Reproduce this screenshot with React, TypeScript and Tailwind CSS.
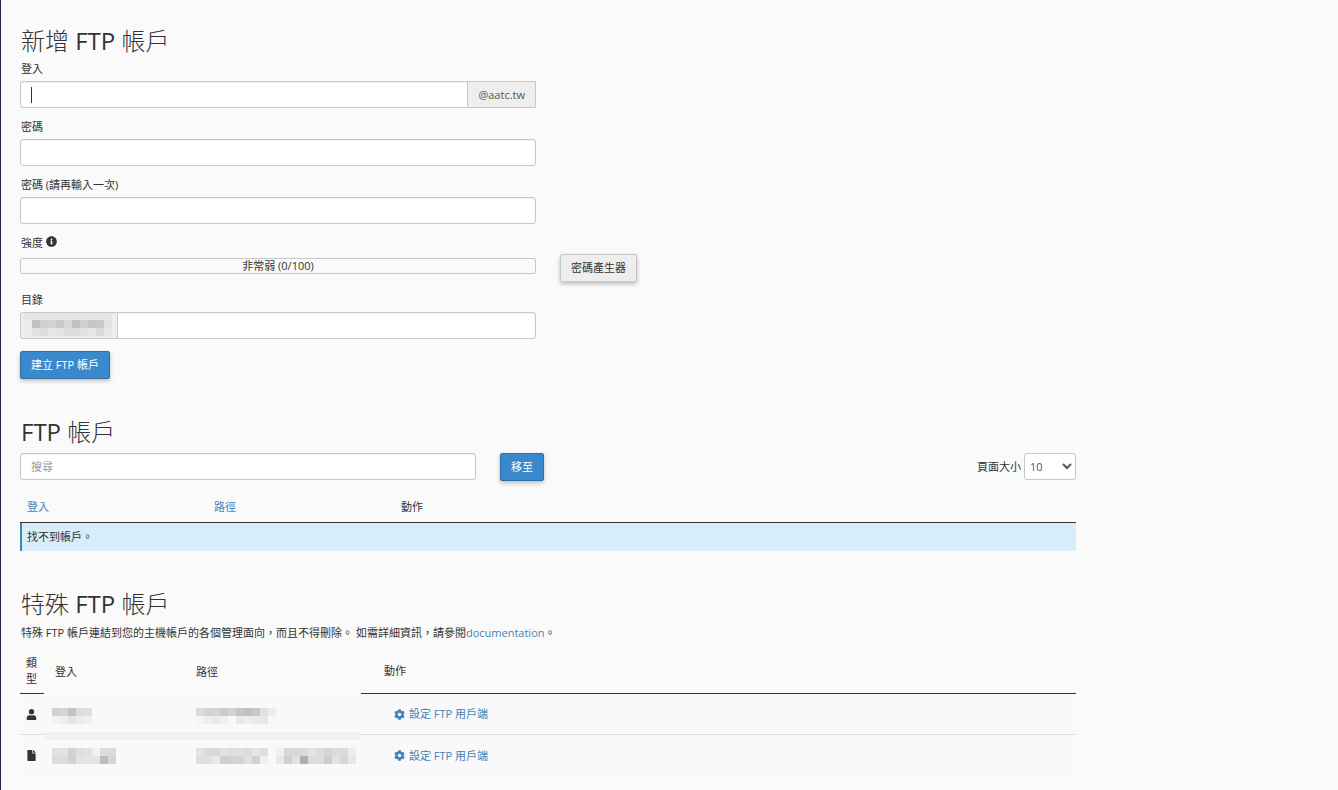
import React from "react";
import { FaCog, FaFile, FaInfoCircle, FaUser } from "react-icons/fa";

const field =
  "h-[27px] w-full min-w-0 rounded-[3px] border border-[#c8c8c8] bg-white px-2.5 text-[11px] text-[#333] shadow-[inset_0_1px_1px_rgba(0,0,0,0.06)] outline-none placeholder:text-[#999]";
const primary =
  "h-7 shrink-0 rounded-[2px] border border-[#2f6ea5] bg-[#3a89cd] px-2.5 text-[11px] text-white shadow-[0_2px_4px_rgba(0,0,0,0.25)]";
const heading = "pl-px text-2xl font-light leading-8";
const fieldLabel = "mb-1 block pl-px";
const link = "text-[#4283b4]";

function Mosaic({ rows }: { rows: string[][] }) {
  return (
    <div className="flex flex-col" aria-hidden="true">
      {rows.map((row, r) => (
        <div key={r} className="flex">
          {row.map((color, c) => (
            <span key={c} className="size-2 shrink-0" style={{ backgroundColor: color }} />
          ))}
        </div>
      ))}
    </div>
  );
}

const directoryMask = [
  ["#ececea", "#c2c0be", "#cecfd1", "#d3d2d0", "#c9c9c9", "#d8d8d8", "#c2c1bf", "#ced0d2", "#c4c5c6", "#cac9c8", "#e0e1e1"],
  ["#ececea", "#e1e1e1", "#dddddf", "#e6e7e3", "#e2e3e4", "#dcdcdc", "#dddddd", "#e0e1e3", "#e5e8e6", "#dadada", "#e6e6e6"],
];
const accounts = [
  {
    icon: <FaUser />,
    label: "使用者",
    login: [
      ["#d0d0d0", "#d5d4d1", "#c1c1c6", "#dedddb", "#dfe0e3"],
      ["#f2f2f2", "#eeeeee", "#e4e4e4", "#ebebeb", "#efeff1"],
    ],
    path: [
      ["#dcdbda", "#d3d3d3", "#d6d6d7", "#cccbca", "#d2d2d4", "#c6c6c6", "#c0c0c0", "#cbc9c8", "#e0e0e0", "#ebecef"],
      ["#f5f5f4", "#eeeeee", "#e8e9ed", "#eeeeec", "#f8f8f6", "#e8e8e8", "#eceeed", "#e8eae9", "#e6e6e6", "#f8f8f8"],
    ],
  },
  {
    icon: <FaFile />,
    label: "記錄",
    login: [
      ["#e2e2e2", "#e3e3e1", "#d2d2d2", "#e0dfdd", "#e2e3e5", "#f1f1f1", "#dedddb", "#d9dadc"],
      ["#dddddc", "#dcdcda", "#d0d1d2", "#e4e3e1", "#e5e5e7", "#e5e5e5", "#bfbdbc", "#d4d5d6"],
    ],
    path: [
      ["#e5e4e2", "#d8d9d8", "#d7d9d9", "#e3e2e1", "#dededd", "#dfe0e0", "#dbdddc", "#e6e6e4", "#dededf", "#f8f8f8", "#f0f0ef", "#d8d8d8", "#d9d8d6", "#dbdbdb", "#e2e3e3", "#dbdde0", "#d7d6d5", "#dddbd9", "#d9dbdd", "#ecedef"],
      ["#dfdedb", "#e0e0df", "#e7e9e9", "#d2cecb", "#cfd3d1", "#d3d3d3", "#e0e0df", "#d2d2d3", "#eeeff1", "#f8f8f8", "#e7e8e8", "#d0d0d0", "#e4e2e0", "#aeb0af", "#dcdbdc", "#dddcdb", "#cbcccf", "#e3e2e0", "#d4d6d7", "#e6e7e8"],
    ],
  },
];

export default function App() {
  return (
    <main className="min-h-screen border-l border-[#29253f] bg-[#fafafa] pl-[19px] pr-4 pt-[25px] pb-3 font-['Open_Sans','Noto_Sans_CJK_TC',sans-serif] text-[11px] leading-4 text-[#333]">
      <div className="max-w-[1056px]">
        <section>
          <h2 className={heading}>新增 <span className="font-normal">FTP</span> 帳戶</h2>
          <form className="mt-1" onSubmit={(e) => e.preventDefault()}>
            <div className="flex max-w-[516px] flex-col gap-[11px]">
              <div>
                <label htmlFor="login" className={fieldLabel}>登入</label>
                <div className="flex">
                  <span className="relative flex grow">
                    <input id="login" className={`${field} rounded-r-none`} />
                    <span className="absolute left-[11px] top-1.5 h-4 w-px bg-[#333]" />
                  </span>
                  <span className="-ml-px flex items-center border border-[#c8c8c8] bg-[#eee] px-2.5 text-[#555]">@aatc.tw</span>
                </div>
              </div>
              <div>
                <label htmlFor="password" className={fieldLabel}>密碼</label>
                <input id="password" type="password" className={`${field} block`} />
              </div>
              <div>
                <label htmlFor="password2" className={fieldLabel}>密碼 (請再輸入一次)</label>
                <input id="password2" type="password" className={`${field} block`} />
              </div>
            </div>
            <div className="mt-[11px] flex gap-6">
              <div className="w-full max-w-[516px]">
                <div className="flex gap-[3px] pl-px">
                  強度 <FaInfoCircle className="mt-px size-[11px]" />
                </div>
                <div className="mt-[7px] flex h-4 items-center justify-center rounded-[2px] border border-[#c8c8c8]">
                  非常弱 (0/100)
                </div>
              </div>
              <button type="button" className="mt-[19px] h-7 shrink-0 rounded-[2px] border border-[#c8c8c8] bg-[#eee] px-2.5 text-[11px] shadow-[0_2px_4px_rgba(0,0,0,0.25)]">
                密碼產生器
              </button>
            </div>
            <div className="mt-2.5 max-w-[516px]">
              <label htmlFor="directory" className={fieldLabel}>目錄</label>
              <div className="flex">
                <span className="-mr-px flex w-[98px] shrink-0 rounded-l-[3px] border border-[#c8c8c8] bg-[#eee] pl-[3px]">
                  <span className="border-t-[7px] border-[#e5e5e5]">
                    <Mosaic rows={directoryMask} />
                  </span>
                </span>
                <input id="directory" className={`${field} rounded-l-none`} />
              </div>
            </div>
            <button type="submit" className={`${primary} mt-3`}>建立 FTP 帳戶</button>
          </form>
        </section>

        <section className="mt-[37px]">
          <h2 className={heading}><span className="font-normal">FTP</span> 帳戶</h2>
          <div className="mt-[5px] flex items-start">
            <input aria-label="搜尋" placeholder="搜尋" className={`${field} max-w-[456px]`} />
            <button type="button" className={`${primary} ml-6`}>移至</button>
            <label htmlFor="page-size" className="ml-auto mr-[3px] mt-1.5 shrink-0">頁面大小</label>
            <select id="page-size" className="h-[27px] w-[52px] shrink-0 rounded-[3px] border border-[#c8c8c8] bg-white px-[1px] text-[11px] text-[#555]">
              <option>10</option>
              <option>20</option>
            </select>
          </div>
          <table className="mt-2.5 w-full table-fixed border-separate border-spacing-0 text-left">
            <thead>
              <tr className="h-8">
                <th className="w-[187px] border-b border-[#333] px-[7px] font-normal"><a href="#login" className={link}>登入</a></th>
                <th className="w-[187px] border-b border-[#333] px-[7px] font-normal"><a href="#path" className={link}>路徑</a></th>
                <th className="border-b border-[#333] px-[7px] font-normal">動作</th>
              </tr>
            </thead>
            <tbody>
              <tr className="h-7">
                <td colSpan={3} className="border-l-2 border-[#3a87ad] bg-[#d7edf9] px-[5px]">找不到帳戶。</td>
              </tr>
            </tbody>
          </table>
        </section>

        <section className="mt-[37px]">
          <h2 className={heading}>特殊 <span className="font-normal">FTP</span> 帳戶</h2>
          <p className="mt-[5px] pl-px">
            特殊 FTP 帳戶連結到您的主機帳戶的各個管理面向，而且不得刪除。 如需詳細資訊，請參閱
            <a href="#documentation" className={link}>documentation</a>。
          </p>
          <table className="mt-2 w-full table-fixed border-separate border-spacing-0 text-left">
            <thead>
              <tr className="h-[45px]">
                <th className="w-6 border-b border-[#333] px-1.5 font-normal">類型</th>
                <th className="w-[146px] px-[11px] font-normal">登入</th>
                <th className="w-[171px] px-1.5 font-normal">路徑</th>
                <th className="border-b border-[#333] px-[23px] font-normal">動作</th>
              </tr>
            </thead>
            <tbody>
              {accounts.map((account, i) => {
                const line = i === 0 ? "border-b border-[#ddd]" : "";
                const band = i === 0 ? "border-b-3 border-[#f0f0f0] pt-1.5" : "border-t-5 border-[#f0f0f0] pb-1";
                return (
                  <tr key={account.label} className="h-[41px] bg-[#f9f9f9]">
                    <td className={`${line} px-1.5`} aria-label={account.label}>{account.icon}</td>
                    <td className={`${band} px-2`}><Mosaic rows={account.login} /></td>
                    <td className={`${band} px-1.5`}><Mosaic rows={account.path} /></td>
                    <td className={`${line} px-[33px] pt-0.5`}>
                      <a href="#configure" className={`${link} inline-flex items-center gap-1`}>
                        <FaCog /> 設定 FTP 用戶端
                      </a>
                    </td>
                  </tr>
                );
              })}
            </tbody>
          </table>
        </section>
      </div>
    </main>
  );
}
